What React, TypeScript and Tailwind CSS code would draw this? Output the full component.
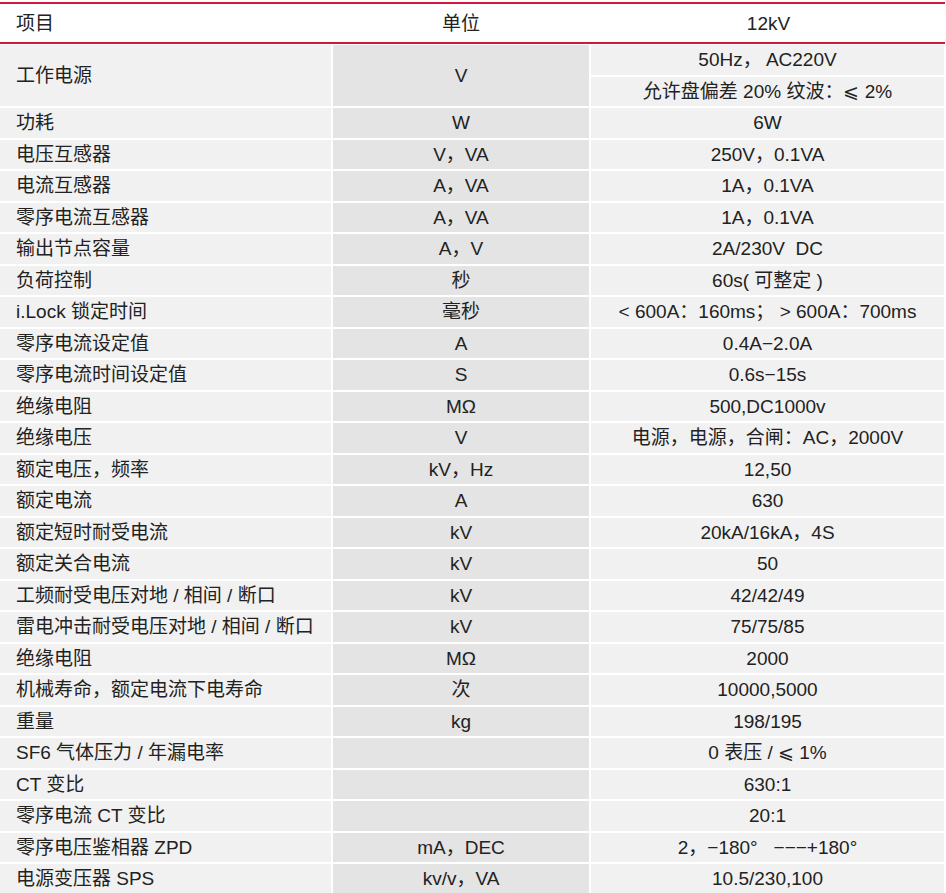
const rows: [string, string, string][] = [
  ['功耗', 'W', '6W'],
  ['电压互感器', 'V，VA', '250V，0.1VA'],
  ['电流互感器', 'A，VA', '1A，0.1VA'],
  ['零序电流互感器', 'A，VA', '1A，0.1VA'],
  ['输出节点容量', 'A，V', '2A/230V  DC'],
  ['负荷控制', '秒', '60s( 可整定 )'],
  ['i.Lock 锁定时间', '毫秒', '< 600A：160ms； > 600A：700ms'],
  ['零序电流设定值', 'A', '0.4A−2.0A'],
  ['零序电流时间设定值', 'S', '0.6s−15s'],
  ['绝缘电阻', 'MΩ', '500,DC1000v'],
  ['绝缘电压', 'V', '电源，电源，合闸：AC，2000V'],
  ['额定电压，频率', 'kV，Hz', '12,50'],
  ['额定电流', 'A', '630'],
  ['额定短时耐受电流', 'kV', '20kA/16kA，4S'],
  ['额定关合电流', 'kV', '50'],
  ['工频耐受电压对地 / 相间 / 断口', 'kV', '42/42/49'],
  ['雷电冲击耐受电压对地 / 相间 / 断口', 'kV', '75/75/85'],
  ['绝缘电阻', 'MΩ', '2000'],
  ['机械寿命，额定电流下电寿命', '次', '10000,5000'],
  ['重量', 'kg', '198/195'],
  ['SF6 气体压力 / 年漏电率', '', '0 表压 / ⩽ 1%'],
  ['CT 变比', '', '630:1'],
  ['零序电流 CT 变比', '', '20:1'],
  ['零序电压鉴相器 ZPD', 'mA，DEC', '2，−180°   −−−+180°'],
  ['电源变压器 SPS', 'kv/v，VA', '10.5/230,100'],
];

const font = { fontFamily: '"Liberation Sans", "Noto Sans CJK SC", sans-serif' };

export default function App() {
  return (
    <div className="w-[946px] h-[893px] overflow-hidden bg-white text-[19px] leading-none text-[#222]" style={font}>
      {/* header */}
      <div className="mt-[2px] mb-[1px] w-[945px] border-y-2 border-[#d3173a] grid grid-cols-[331px_256px_355px] gap-x-[2px] h-[42px] items-center">
        <div className="pl-4">项目</div>
        <div className="text-center">单位</div>
        <div className="text-center">12kV</div>
      </div>

      {/* body */}
      <div className="grid grid-cols-[331px_256px_353px] gap-[2px] auto-rows-[29.5px]">
        <div className="row-span-2 bg-[#f1f1f1] pl-4 flex items-center">工作电源</div>
        <div className="row-span-2 bg-[#e4e4e4] flex items-center justify-center">V</div>
        <div className="bg-[#f1f1f1] flex items-center justify-center whitespace-pre">50Hz， AC220V</div>
        <div className="bg-[#f1f1f1] flex items-center justify-center whitespace-pre">允许盘偏差 20% 纹波：⩽ 2%</div>
        {rows.map(([a, b, c], i) => (
          <div key={i} className="contents">
            <div className="bg-[#f1f1f1] pl-4 flex items-center whitespace-nowrap">{a}</div>
            <div className="bg-[#e4e4e4] flex items-center justify-center whitespace-nowrap">{b}</div>
            <div className="bg-[#f1f1f1] flex items-center justify-center whitespace-pre">{c}</div>
          </div>
        ))}
      </div>
    </div>
  );
}
